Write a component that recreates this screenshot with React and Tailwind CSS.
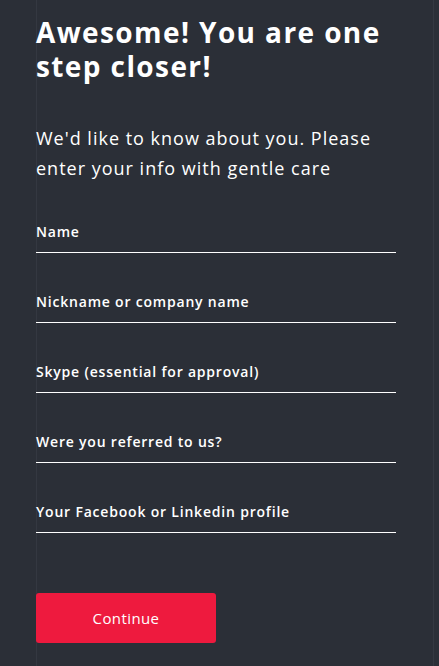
import React from 'react'

const FIELDS = [
  'Name',
  'Nickname or company name',
  'Skype (essential for approval)',
  'Were you referred to us?',
  'Your Facebook or Linkedin profile',
]

export default function App() {
  return (
    <div className="min-h-[666px] bg-[#2b2f37] pl-[36px] font-['Open_Sans','Lato',sans-serif] text-white">
      <div className="min-h-[666px] w-[398px] border-x border-[#343841] pt-[15px]">
        <h1 className="-ml-px w-[360px] text-[28px] font-bold leading-[34px] tracking-[1.4px]">
          Awesome! You are one step closer!
        </h1>

        <p className="-ml-px mt-[40px] w-[360px] text-[18px] leading-[30px] tracking-[1px]">
          We'd like to know about you. Please enter your info with gentle care
        </p>

        <form className="-ml-px mt-[39px] w-[360px]">
          {FIELDS.map((label, i) => (
            <label key={label} className={`block border-b border-white ${i ? 'mt-[39px]' : ''}`}>
              <span className="block text-[14px] font-semibold leading-[20px] tracking-[0.8px]">{label}</span>
              <input type="text" className="block h-[10px] w-full bg-transparent outline-none" />
            </label>
          ))}

          <button
            type="button"
            className="mt-[60px] h-[50px] w-[180px] rounded-[3px] bg-[#ee1a3e] text-[15px] font-medium tracking-[0.4px] text-white"
          >
            Continue
          </button>
        </form>
      </div>
    </div>
  )
}
